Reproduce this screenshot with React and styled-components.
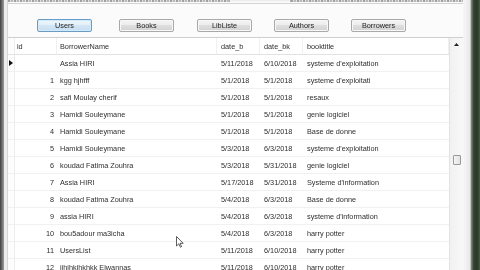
import React from 'react';
import styled, { createGlobalStyle } from 'styled-components';

const Global = createGlobalStyle`
  html, body { margin: 0; padding: 0; width: 480px; height: 270px; overflow: hidden; background: #fff; }
  #root { width: 480px; height: 270px; }
`;

const Window = styled.div`
  position: relative;
  width: 480px;
  height: 270px;
  overflow: hidden;
  display: grid;
  grid-template-columns: 4px 4px 455px 8px 9px;
  font-family: "Liberation Sans", Arial, sans-serif;
  font-size: 7.3px;
  color: #2e2e2e;
`;

const DarkEdge = styled.div`
  background: linear-gradient(to right, #3f3f3f, #6f6f6f 50%, #9c9c9c);
`;

const LightEdge = styled.div`
  background: #ededed;
  border-right: 1px solid #d6d6d6;
  box-sizing: border-box;
`;

const RightGutter = styled.div`
  background: linear-gradient(to right, #f7f7f7, #e9e9e9);
  border-right: 1px solid #c4c4c4;
  box-sizing: border-box;
`;

const RightDark = styled.div`
  background: linear-gradient(to right, #8a9088, #33412f 30%, #2a3828 70%, #4a5a48);
`;

const Main = styled.div`
  display: flex;
  flex-direction: column;
  background: #fbfbfb;
  min-width: 0;
`;

const TopStrip = styled.div`
  height: 4px;
  display: flex;
  border-bottom: 1px solid #d4d4d4;
  box-sizing: border-box;
`;

const TabText = styled.div`
  flex: ${p => p.$grow};
  background: ${p => p.$active
    ? 'linear-gradient(#e8e8e8, #f8f8f8)'
    : 'repeating-linear-gradient(90deg, #a0a0a0 0 2px, #dcdcdc 2px 3px, #b8b8b8 3px 5px, #e6e6e6 5px 6px)'};
  border-left: ${p => p.$active ? '1px solid #b0b0b0' : 'none'};
  border-right: ${p => p.$active ? '1px solid #b0b0b0' : 'none'};
  height: 2px;
`;

const ButtonBar = styled.div`
  height: 33px;
  display: flex;
  align-items: flex-start;
  padding-top: 15px;
  box-sizing: border-box;
`;

const Btn = styled.button`
  width: 55px;
  height: 13px;
  margin: 0 0 0 ${p => p.$ml}px;
  padding: 0;
  font: inherit;
  color: #222;
  border: 1px solid ${p => (p.$active ? '#6a9cc6' : '#a9a9a9')};
  border-radius: 2px;
  box-shadow: ${p => (p.$active ? 'inset 0 0 0 1px #d3eafa' : 'inset 0 0 0 1px #f8f8f8')};
  background: ${p => (p.$active
    ? 'linear-gradient(#eef6fc, #e2eff9 50%, #d2e6f5 50%, #c7def1)'
    : 'linear-gradient(#f4f4f4, #ececec 50%, #dedede 50%, #d2d2d2)')};
  line-height: 11px;
`;

const BtnLabel = styled.span`
  display: inline-block;
  filter: grayscale(1);
`;

const Grid = styled.div`
  flex: 1;
  display: flex;
  border-top: 1px solid #cfcfcf;
  background: #fff;
  min-height: 0;
  filter: grayscale(1);
`;

const Table = styled.div`
  flex: 1;
  overflow: hidden;
  min-width: 0;
`;

const Row = styled.div`
  display: grid;
  grid-template-columns: 7px 42px 160px 43px 43px 1fr;
  height: 17px;
  box-sizing: border-box;
  border-bottom: 1px solid ${p => (p.$header ? '#e2e2e2' : '#f1f1f1')};
  align-items: stretch;
`;

const Cell = styled.div`
  display: flex;
  align-items: center;
  justify-content: ${p => (p.$right ? 'flex-end' : 'flex-start')};
  padding: ${p => (p.$right ? '0 2px 0 0' : `0 0 0 ${p.$pl ?? 4}px`)};
  white-space: nowrap;
  overflow: hidden;
  border-right: 1px solid ${p => (p.$header ? '#f0f0f0' : 'transparent')};
  box-sizing: border-box;
`;

const RowHead = styled.div`
  display: flex;
  align-items: center;
  justify-content: center;
  border-right: 1px solid #ececec;
  background: #fdfdfd;
  box-sizing: border-box;
`;

const Scrollbar = styled.div`
  width: 14px;
  display: flex;
  flex-direction: column;
  align-items: center;
  background: linear-gradient(to right, #f1f1f1, #f8f8f8);
  border-left: 1px solid #e3e3e3;
  box-sizing: border-box;
`;

const ArrowBox = styled.div`
  height: 13px;
  width: 100%;
  display: flex;
  align-items: center;
  justify-content: center;
`;

const Thumb = styled.div`
  margin-top: ${p => p.$top}px;
  width: 8px;
  height: 10px;
  border: 1px solid #9a9a9a;
  border-radius: 1px;
  background: linear-gradient(to right, #f4f4f4, #e2e2e2);
  box-sizing: border-box;
`;

const Cursor = styled.svg`
  position: absolute;
  left: 176px;
  top: 236px;
`;

const rows = [
  ['', 'Assia HIRI', '5/11/2018', '6/10/2018', "systeme d'exploitation"],
  ['1', 'kgg hjhfff', '5/1/2018', '5/1/2018', "systeme d'exploitati"],
  ['2', 'safi Moulay cherif', '5/1/2018', '5/1/2018', 'resaux'],
  ['3', 'Hamidi Souleymane', '5/1/2018', '5/1/2018', 'genie logiciel'],
  ['4', 'Hamidi Souleymane', '5/1/2018', '5/1/2018', 'Base de donne'],
  ['5', 'Hamidi Souleymane', '5/3/2018', '6/3/2018', "systeme d'exploitation"],
  ['6', 'koudad Fatima Zouhra', '5/3/2018', '5/31/2018', 'genie logiciel'],
  ['7', 'Assia HIRI', '5/17/2018', '5/31/2018', "Systeme d'information"],
  ['8', 'koudad Fatima Zouhra', '5/4/2018', '6/3/2018', 'Base de donne'],
  ['9', 'assia HIRI', '5/4/2018', '6/3/2018', "systeme d'information"],
  ['10', 'bou5adour ma3icha', '5/4/2018', '6/3/2018', 'harry potter'],
  ['11', 'UsersList', '5/11/2018', '6/10/2018', 'harry potter'],
  ['12', 'ijhjhkjhkhkk Elwannas', '5/11/2018', '6/10/2018', 'harry potter'],
];

const buttons = [
  ['Users', 29, true],
  ['Books', 27],
  ['LibListe', 23],
  ['Authors', 22],
  ['Borrowers', 22],
];

export default function App() {
  return (
    <>
      <Global />
      <Window>
        <DarkEdge />
        <LightEdge />
        <Main>
          <TopStrip>
            <TabText $grow={222} />
            <TabText $grow={60} $active />
            <TabText $grow={173} />
          </TopStrip>
          <ButtonBar>
            {buttons.map(([label, ml, active]) => (
              <Btn key={label} $ml={ml} $active={active}>
                <BtnLabel>{label}</BtnLabel>
              </Btn>
            ))}
          </ButtonBar>
          <Grid>
            <Table>
              <Row $header>
                <RowHead />
                <Cell $header $pl={2}>id</Cell>
                <Cell $header $pl={3}>BorrowerName</Cell>
                <Cell $header>date_b</Cell>
                <Cell $header>date_bk</Cell>
                <Cell $header>booktitle</Cell>
              </Row>
              {rows.map((r, i) => (
                <Row key={i}>
                  <RowHead>
                    {i === 0 && (
                      <svg width="4" height="6" viewBox="0 0 4 6">
                        <path d="M0 0 L4 3 L0 6 Z" fill="#111" />
                      </svg>
                    )}
                  </RowHead>
                  <Cell $right>{r[0]}</Cell>
                  <Cell $pl={3}>{r[1]}</Cell>
                  <Cell>{r[2]}</Cell>
                  <Cell>{r[3]}</Cell>
                  <Cell>{r[4]}</Cell>
                </Row>
              ))}
            </Table>
            <Scrollbar>
              <ArrowBox>
                <svg width="5" height="3" viewBox="0 0 5 3">
                  <path d="M0 3 L2.5 0 L5 3 Z" fill="#222" />
                </svg>
              </ArrowBox>
              <Thumb $top={104} />
            </Scrollbar>
          </Grid>
        </Main>
        <RightGutter />
        <RightDark />
        <Cursor width="8" height="12" viewBox="0 0 8 12">
          <path d="M0.5 0.5 L0.5 10 L2.8 7.8 L4.4 11.2 L5.6 10.6 L4.1 7.3 L7.2 7.3 Z" fill="#fff" stroke="#333" strokeWidth="0.8" />
        </Cursor>
      </Window>
    </>
  );
}
